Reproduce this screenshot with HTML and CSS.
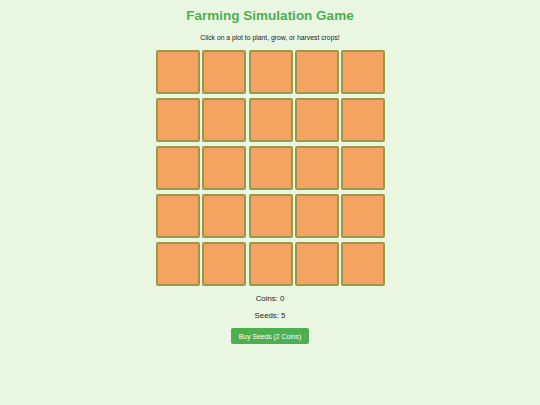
FILE: index.html
```html
<!DOCTYPE html>
<html>
<head>
<meta charset="utf-8">
<link rel="stylesheet" href="styles.css">
</head>
<body>
<div class="page">
  <h1 class="title">Farming Simulation Game</h1>
  <p class="hint">Click on a plot to plant, grow, or harvest crops!</p>
  <div class="farm">
    <div class="plot"></div><div class="plot"></div><div class="plot"></div><div class="plot"></div><div class="plot"></div>
    <div class="plot"></div><div class="plot"></div><div class="plot"></div><div class="plot"></div><div class="plot"></div>
    <div class="plot"></div><div class="plot"></div><div class="plot"></div><div class="plot"></div><div class="plot"></div>
    <div class="plot"></div><div class="plot"></div><div class="plot"></div><div class="plot"></div><div class="plot"></div>
    <div class="plot"></div><div class="plot"></div><div class="plot"></div><div class="plot"></div><div class="plot"></div>
  </div>
  <p class="stat">Coins: 0</p>
  <p class="stat">Seeds: 5</p>
  <button class="buy">Buy Seeds (2 Coins)</button>
</div>
</body>
</html>
```
FILE: styles.css
```css
html, body {
  margin: 0;
  padding: 0;
  background: #e9f7e2;
}
body {
  font-family: "Liberation Sans", Arial, sans-serif;
  color: #222;
}
.page {
  display: flex;
  flex-direction: column;
  align-items: center;
  padding-top: 8px;
}
.title {
  margin: 0;
  font-size: 13.5px;
  line-height: 16px;
  font-weight: bold;
  color: #4caf50;
}
.hint {
  margin: 10px 0 0;
  font-size: 6.8px;
  line-height: 8px;
}
.farm {
  margin-top: 8px;
  margin-left: 1px;
  display: grid;
  grid-template-columns: repeat(5, 44px);
  grid-auto-rows: 44px;
  column-gap: 2.3px;
  row-gap: 4px;
}
.plot {
  box-sizing: border-box;
  background: #f4a460;
  border: 2px solid #9c984a;
  border-radius: 2px;
}
.stat {
  margin: 0;
  font-size: 7.8px;
  line-height: 9px;
}
.farm + .stat {
  margin-top: 8px;
}
.stat + .stat {
  margin-top: 8px;
}
.buy {
  margin-top: 8px;
  background: #4caf50;
  color: #fff;
  border: none;
  border-radius: 2px;
  font-family: "Liberation Sans", Arial, sans-serif;
  font-size: 6.8px;
  width: 78px;
  height: 16px;
  padding: 0;
}
```
